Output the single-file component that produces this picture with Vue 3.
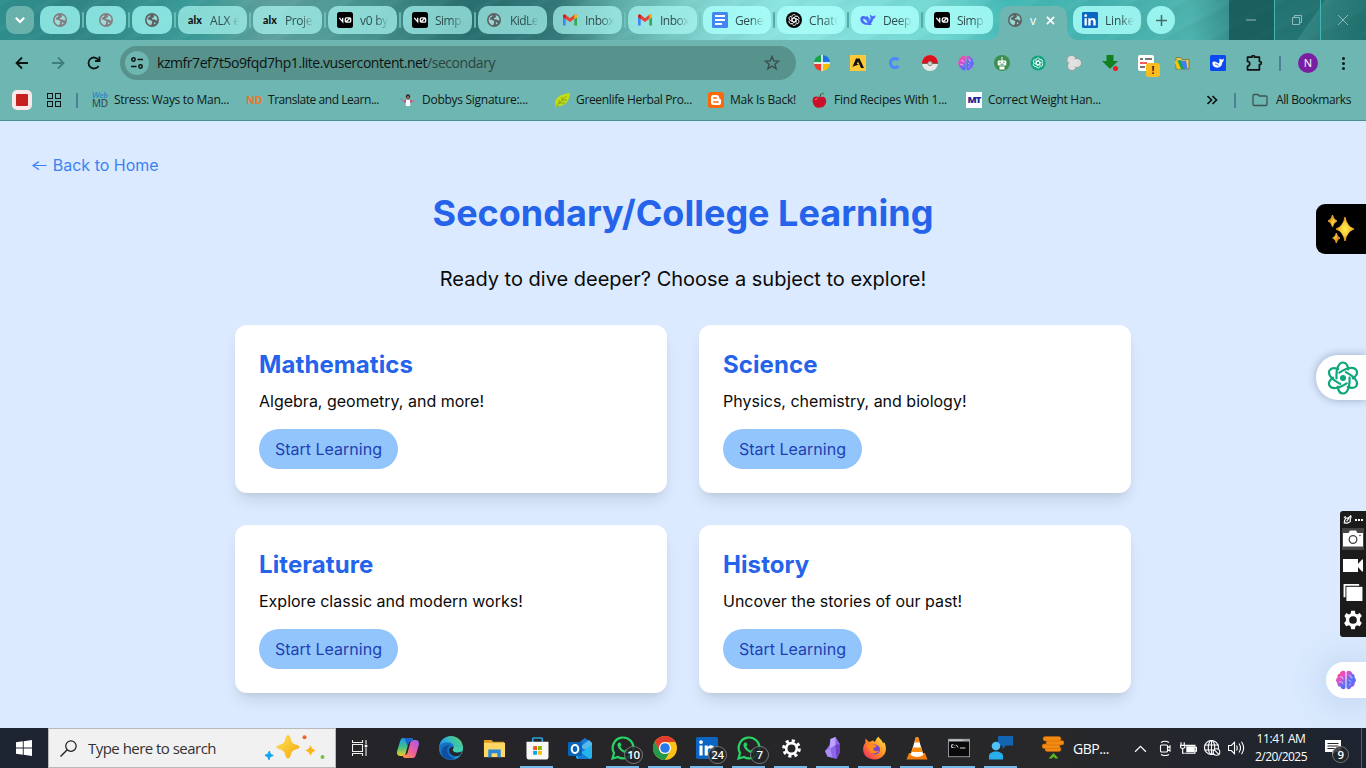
<script setup>
const tabs = [
  { icon: 'globe', small: true },
  { icon: 'globe', small: true },
  { icon: 'globe', small: true, dark: true },
  { mark: 'alx', title: 'ALX e', fit: 30 },
  { mark: 'alx', title: 'Proje', fit: 27 },
  { icon: 'v0', title: 'v0 by', fit: 28 },
  { icon: 'v0', title: 'Simp', fit: 26 },
  { icon: 'globe', title: 'KidLe', fit: 28, dark: true },
  { icon: 'gmail', title: 'Inbox', fit: 29 },
  { icon: 'gmail', title: 'Inbox', fit: 29 },
  { icon: 'docs', title: 'Gene', fit: 28, narrow: true },
  { icon: 'gpt', title: 'ChatG', fit: 34, narrow: true },
  { icon: 'whale', title: 'Deep', fit: 28, narrow: true },
  { icon: 'v0', title: 'Simp', fit: 26, narrow: true },
]

const extensions = [
  'quad', 'amber', 'cee', 'ball', 'brain', 'robot', 'gptgreen',
  'clover', 'down', 'list', 'drive', 'bluewhale', 'puzzle',
]

const bookmarks = [
  { mark: 'webmd', lines: ['Web', 'MD'], title: 'Stress: Ways to Man...', fit: 115 },
  { mark: 'nd', lines: ['ND'], title: 'Translate and Learn...', fit: 111 },
  { icon: 'dobby', title: 'Dobbys Signature:...', fit: 106 },
  { icon: 'leaf', title: 'Greenlife Herbal Pro...', fit: 116 },
  { icon: 'blogger', title: 'Mak Is Back!', fit: 66, short: true },
  { icon: 'apple', title: 'Find Recipes With 1...', fit: 113 },
  { mark: 'mt', lines: ['MT'], title: 'Correct Weight Han...', fit: 113 },
]

const subjects = [
  { title: 'Mathematics', text: 'Algebra, geometry, and more!' },
  { title: 'Science', text: 'Physics, chemistry, and biology!' },
  { title: 'Literature', text: 'Explore classic and modern works!' },
  { title: 'History', text: 'Uncover the stories of our past!' },
]

const apps = [
  { icon: 'copilot', wide: true },
  { icon: 'edge', wide: true },
  { icon: 'explorer', wide: true },
  { icon: 'store', open: true, wide: true },
  { icon: 'outlook', wide: true },
  { icon: 'whatsapp', open: true, badge: '10' },
  { icon: 'chrome', open: true },
  { icon: 'linkedin', open: true, badge: '24' },
  { icon: 'whatsapp', open: true, badge: '7' },
  { icon: 'gear', open: true },
  { icon: 'obsidian', open: true },
  { icon: 'firefox', open: true },
  { icon: 'vlc', open: true },
  { icon: 'cmd', open: true },
  { icon: 'people', open: true },
]

// Adjusts tracking so a label takes exactly the given width.
const vFit = {
  mounted(el, { value }) {
    if (!value) return
    const width = el.getBoundingClientRect().width
    el.style.letterSpacing = (value - width) / el.textContent.length + 'px'
  },
}
</script>

<template>
  <svg class="sprite" aria-hidden="true">
    <defs>
      <linearGradient id="gBrain" x1="0" x2="1" y1="0" y2="1"><stop offset="0" stop-color="#ff4a6a" /><stop offset=".3" stop-color="#e54fc8" /><stop offset=".62" stop-color="#4f6ff8" /><stop offset="1" stop-color="#b453ee" /></linearGradient>
      <linearGradient id="gStar" x1="0" x2="1" y1="0" y2="1"><stop offset="0" stop-color="#ffe25a" /><stop offset="1" stop-color="#f5a70c" /></linearGradient>
      <radialGradient id="gSpark"><stop offset="0" stop-color="#fff04a" /><stop offset=".55" stop-color="#fcc93a" /><stop offset="1" stop-color="#e08a1c" /></radialGradient>
      <linearGradient id="gEdge" x1="0" x2="1" y1="1" y2="0"><stop offset="0" stop-color="#0f5fb8" /><stop offset=".5" stop-color="#2aa9e6" /><stop offset="1" stop-color="#5be35a" /></linearGradient>
      <linearGradient id="gCopA" x1="0" x2="0" y1="0" y2="1"><stop offset="0" stop-color="#1a9bee" /><stop offset=".5" stop-color="#3fbf8a" /><stop offset="1" stop-color="#f2cf1c" /></linearGradient>
      <linearGradient id="gCopB" x1="1" x2="0" y1="0" y2="1"><stop offset="0" stop-color="#9a5cf5" /><stop offset=".5" stop-color="#ee5c9c" /><stop offset="1" stop-color="#ff9e3e" /></linearGradient>
      <linearGradient id="gFox" x1="1" x2="0" y1="0" y2="1"><stop offset="0" stop-color="#fff04d" /><stop offset=".45" stop-color="#ff9320" /><stop offset="1" stop-color="#f2206b" /></linearGradient>
    </defs>

    <symbol id="globe" viewBox="0 0 16 16"><circle cx="8" cy="8" r="8" fill="currentColor" /><path d="M6.200 2.200 5.800 4.200 3.900 5 3 7.400 5 7.800 7 8.600 8.400 9.800 7.800 12.200 6.800 14.100A6.200 6.200 0 0 1 2 6.700 6.200 6.200 0 0 1 6.200 2.200ZM9 2l1.600 1.200-.9 2-2 .7.600 1.600 2.200-.4 1.600 1.300 2 .1A6.200 6.200 0 0 0 9 2Zm1.700 8.200 1.600 1.400-1.400 1.600-.9-1.400Z" fill="#a9f4f0" opacity=".8" /></symbol>
    <symbol id="v0" viewBox="0 0 16 16"><rect width="16" height="16" rx="2.500" fill="#000" /><path d="M2.300 5.800 5.700 9.800V5.800M8.300 9V7q0-1.200 1.200-1.200h3q1.200 0 1.200 1.200v1.900q0 1.200-1.200 1.200h-3Q8.300 10.100 8.300 9M8.700 9.900 13.300 6.100" fill="none" stroke="#fff" stroke-width="1.300" /></symbol>
    <symbol id="gmail" viewBox="0 0 16 16"><path d="M1 13.500h2.700V7.200L1 5.200Z" fill="#4285f4" /><path d="M12.300 13.500H15V5.200l-2.700 2Z" fill="#34a853" /><path d="M1 5.200v-1C1 2.400 2.800 2 4 3l4 3.200V10L3.700 7Z" fill="#ea4335" /><path d="m8 10 4.300-3.200L15 5.200v-1C15 2.400 13.200 2 12 3L8 6.200Z" fill="#ea4335" /><path d="M12.300 3v4.100L15 5.200v-1C15 2.400 13.400 2.100 12.300 3Z" fill="#fbbc04" /><path d="M3.700 3v4.100L1 5.200v-1C1 2.400 2.600 2.100 3.700 3Z" fill="#c5221f" /></symbol>
    <symbol id="docs" viewBox="0 0 16 16"><rect width="16" height="16" rx="1.500" fill="#4285f4" /><path d="M3 4h10M3 8h10M3 12h7" stroke="#fff" stroke-width="1.800" /></symbol>
    <symbol id="knot" viewBox="0 0 16 16"><g fill="none" stroke="currentColor" stroke-width="1"><path id="petal" d="M8 5.500 5.500 7V4.200a2.500 2.500 0 0 1 4.700-1.100" /><use href="#petal" transform="rotate(60 8 8)" /><use href="#petal" transform="rotate(120 8 8)" /><use href="#petal" transform="rotate(180 8 8)" /><use href="#petal" transform="rotate(240 8 8)" /><use href="#petal" transform="rotate(300 8 8)" /><path d="m8 5.400 2.300 1.300v2.600L8 10.600 5.700 9.300V6.700Z" /></g></symbol>
    <symbol id="gpt" viewBox="0 0 16 16"><circle cx="8" cy="8" r="8" fill="#050505" /><use href="#knot" x="1" y="1" width="14" height="14" color="#fff" /></symbol>
    <symbol id="gptgreen" viewBox="0 0 16 16"><circle cx="8" cy="8" r="7.500" fill="#12a37f" /><use href="#knot" x="1.500" y="1.500" width="13" height="13" color="#fff" /></symbol>
    <symbol id="whale" viewBox="0 0 16 16"><path fill-rule="evenodd" d="M.5 6C1.500 3.600 4 3.600 6 4.800L7.200 4l1.600 1.900 1.700 1.600C10.900 6 10 4.800 10 2.800c1 .2 1.600 1 2.200 1.400 1 .3 2-.2 3.300-1.200 0 2.400-.9 3.800-2.500 4.300-.3 2.100-1 3.200-2.200 4.300l1.200 1c-1.700.7-3.600.6-5 .2C3 12.600-.3 9.800.5 6Zm2.400.7c.2 2.600 2.300 4.200 4.800 4.300C7 8.600 5.300 6.700 2.900 6.700Zm5.300.1.900 1.900.8-.6Z" fill="#4d6bfe" /></symbol>
    <symbol id="linkedin" viewBox="0 0 16 16"><rect width="16" height="16" rx="1.300" fill="#0a66c2" /><path d="M2.500 6.200h2.300v7.300H2.500ZM6.300 6.200h2.200v1c1.400-2 5.200-1.500 5.200 2v4.300h-2.400V9.700c0-2.200-2.700-2-2.700 0v3.800H6.300Z" fill="#fff" /><circle cx="3.650" cy="3.700" r="1.400" fill="#fff" /></symbol>

    <symbol id="quad" viewBox="0 0 16 16"><path d="M7.300 7.300H0A8 8 0 0 1 7.300 0Z" fill="#16a34a" /><path d="M8.700 7.300H16A8 8 0 0 0 8.700 0Z" fill="#1a73e8" /><path d="M7.300 8.700H0A8 8 0 0 0 7.300 16Z" fill="#ea3b2d" /><path d="M8.700 8.700H16A8 8 0 0 1 8.700 16Z" fill="#fbbc04" /><path d="M8 0v16M0 8h16" stroke="#fff" stroke-width="1.400" /></symbol>
    <symbol id="amber" viewBox="0 0 16 16"><path fill="#fdc938" d="M0 0h16v16H0z" /><path d="M6 3.500h3.500L14 13h-3L8 6.500 6.800 9 9 9.500 3 11.500 2 13Z" fill="#111" /></symbol>
    <symbol id="cee" viewBox="0 0 16 16"><path d="M12.500 5A4.600 4.600 0 1 0 12.500 11" fill="none" stroke="#4a86ff" stroke-width="3" /></symbol>
    <symbol id="ball" viewBox="0 0 16 16"><circle cx="8" cy="8" r="8" fill="#e8e8e8" /><path d="M0 8a8 8 0 0 1 16 0Z" fill="#d8131b" /><path d="M0 8.500h16" stroke="#84565a" stroke-width="1" /><circle cx="8" cy="8.500" r="2.200" fill="#ccc" stroke="#777" stroke-width=".7" /></symbol>
    <symbol id="brain" viewBox="0 0 16 16"><path d="M7.600 1.800C6.500-.3 3.300.8 3.200 2.700 1.200 3 .8 5 1.300 6-.5 7-.2 9.500 1.100 10.200c-.3 2 1 3.400 2.500 3.200C4.300 15.800 7 16 7.600 14.200ZM8.400 1.800C9.500-.3 12.700.8 12.800 2.700c2 .3 2.400 2.300 1.900 3.300 1.800 1 1.500 3.500.2 4.200.3 2-1 3.400-2.500 3.200-.7 2.400-3.400 2.600-4 .8Z" fill="url(#gBrain)" /><path d="M3 5.500h2l.8 2M2.200 9.500h2.500l1 1.800M10.300 4.200l1.600.5v1.600h1.500M10 8l2.300 1.400M10.300 12l1.500-1" fill="none" stroke="#fff" stroke-opacity=".75" stroke-width=".6" /></symbol>
    <symbol id="robot" viewBox="0 0 16 16"><circle cx="8" cy="8" r="8" fill="#3d8f4e" /><path d="M4.500 5.500h7q.8 0 .8.800v3.400q0 .8-.8.800h-7q-.8 0-.8-.8V6.300q0-.8.800-.8ZM7.500 2h1v4h-1ZM5.500 11.500h5v3h-5Z" fill="#fff" /><path d="M5.500 7.300h1.300M9.200 7.300h1.300M6.500 9.200h3" stroke="#3d8f4e" stroke-width="1" /></symbol>
    <symbol id="clover" viewBox="0 0 16 16"><g fill="#dedede" stroke="#8e8e8e" stroke-width=".7"><circle cx="5.500" cy="5" r="4.600" /><circle cx="6" cy="11" r="4.500" /><circle cx="11" cy="8" r="4.500" /></g><circle cx="7.300" cy="8" r="3.800" fill="#e2e2e2" /></symbol>
    <symbol id="down" viewBox="0 0 16 16"><path d="M4.500 0h7v6H16l-8 8-8-8h4.500Z" fill="#128020" /><circle cx="13.500" cy="13.500" r="2.500" fill="#f3191c" /></symbol>
    <symbol id="list" viewBox="0 0 16 16"><rect width="16" height="16" rx="2" fill="#fff" /><path d="M2 4h3M7 4h7M2 12h5" stroke="#494949" stroke-width="1.600" /><path d="M2 8h7" stroke="#ee4c4c" stroke-width="1.800" /></symbol>
    <symbol id="drive" viewBox="0 0 16 16"><path d="M2 14V2.500h4.500L8 4.500h7V14Z" fill="#efc954" stroke="#6b6a33" stroke-width=".7" /><path d="m.3 6.500 3-1 4 8.500H4Z" fill="#ffc400" /><path d="m3.300 5.500 3.700-.5 4 9H7Z" fill="#18a35b" /><path d="m6.500 6 5.500-.5 1.500 8.500H10Z" fill="#3f7fef" /></symbol>
    <symbol id="bluewhale" viewBox="0 0 16 16"><rect width="16" height="16" rx="1.500" fill="#0a49f0" /><path d="M2.500 7C4 6 5.500 6.500 7 7.500l2 1c.9-1.500.2-3.200.5-5l2.300 1.200 2-1.200c0 2.200-.5 3.200-1.500 3.800-.2 4.200-3.500 6.400-7.100 5C3.200 11.500 2 9.500 2.500 7Z" fill="#fff" /><path d="M5 9c1.600 0 3 .9 3.800 2.300" fill="none" stroke="#0a49f0" stroke-width=".8" /></symbol>
    <symbol id="puzzle" viewBox="0 0 16 16"><path d="M1.500 2.200H6V1.500a1.200 1.200 0 0 1 2.400 0v.7h5v4.300h.4a1.500 1.500 0 0 1 0 3h-.4v5.300H1.500V11a2 2 0 0 0 0-4.500Z" fill="none" stroke="#111" stroke-width="1.700" stroke-linejoin="round" /></symbol>

    <symbol id="dobby" viewBox="0 0 16 16"><circle cx="8" cy="4.500" r="2.200" fill="#382b2b" /><path d="M1.500 7 4 9.500l2.500-1.500h3L12 9.500l3-1" fill="none" stroke="#b98084" stroke-width="1.200" /><path d="M5.800 8h4.400v6H5.800Z" fill="#fff" /><path d="M4.400 8h1.500v2.500H4.400ZM10.200 8h1.500v2.500h-1.500Z" fill="#d92e9e" /><circle cx="8" cy="5.200" r="1.100" fill="#a46b51" /><circle cx="1.500" cy="7" r="1" fill="#5d9dc8" /></symbol>
    <symbol id="leaf" viewBox="0 0 16 16"><path d="M1.500 13.500C-.5 6 6.500 2.500 15.700.8 16 9 11 14.500 3.500 14L1.600 16H.8Z" fill="#c4dd16" /><path d="M1 15.500 12.500 4M5 12V8M8 9V5M6 11h5M9 8h4" stroke="#6b9414" stroke-width=".7" fill="none" /></symbol>
    <symbol id="blogger" viewBox="0 0 16 16"><rect width="16" height="16" rx="2.500" fill="#f96a0b" /><path d="M5.500 3h3q2.700 0 2.700 2.800 0 1 .8 1.100 1 .1 1 1v2.500Q13 13 10.500 13h-5Q3 13 3 10.500v-5Q3 3 5.500 3Z" fill="#fff" /><path d="M5.800 6h2.500M5.800 10h4.300" stroke="#f96a0b" stroke-width="1.500" stroke-linecap="round" /></symbol>
    <symbol id="apple" viewBox="0 0 16 16"><path d="M7.500 5.500C3.500 3-.5 5 .8 10.500 2 15 5 16.300 7.500 15.500c2.500.3 5.500-1 6.500-5C14.800 5 11 3.700 7.500 5.500Z" fill="#ca1026" /><path d="M3 8q1-2 2.600-1" stroke="#f38183" fill="none" /><path d="M7.400 5.500 9 2" stroke="#593520" stroke-width="1" /><path d="M8.800 2q2.500-2.600 3.700-1-1.700 2.500-3.700 1Z" fill="#48923d" /></symbol>

    <symbol id="gear" viewBox="0 0 24 24"><path fill-rule="evenodd" d="m10 2-.5 3-2 1-2.700-1.600L2.600 7.600 4.300 10v3.200l-2 2 2.200 3.500 2.900-1L9.500 19l.5 3h4l.5-3 2-1.200 2.900 1 2.200-3.600-2-2V10l2-2.400-2.200-3.300L16.500 6l-2-1L14 2Zm2 5.800a4.200 4.200 0 1 1 0 8.400 4.200 4.200 0 0 1 0-8.400Z" fill="#fff" /></symbol>
    <symbol id="cogwheel" viewBox="0 0 24 24"><g fill="none" stroke="#fff"><circle cx="12" cy="12" r="6.700" stroke-width="3.400" /><circle cx="12" cy="12" r="9.800" stroke-width="4" stroke-dasharray="3.900 3.797" /></g></symbol>
    <symbol id="copilot" viewBox="0 0 24 24"><path d="M7 2h7.500c2 0 2.700 1.500 3.300 3.300h-3.300q-1.500 0-2 1.700L9.500 18q-.7 2-2.500 2H4.500C1 20 .6 17 1.300 14.500L4 5.500Q5 2 7 2Z" fill="url(#gCopA)" /><path d="M17 22H9.500c-2 0-2.800-1.500-3.300-3.300h3.300q1.500 0 2-1.700l3-11Q15 4 17 4h2.500c3.500 0 3.900 3 3.200 5.500l-2.700 9Q19 22 17 22Z" fill="url(#gCopB)" /><path d="M13.500 2q2.700 0 3.700 3.300h-3Q13 5.300 12.500 7l-1 3L9.500 5Q9 2.500 7 2Z" fill="#1b61d1" /></symbol>
    <symbol id="edge" viewBox="0 0 24 24"><circle cx="12" cy="12" r="12" fill="url(#gEdge)" /><path d="M0 12C1 5.500 12 4 14.500 9.500c1 2-.5 3.500-.5 4.500 0 2 5 3.500 9 .5C20 22 10 26 4 21 .5 18 0 14 0 12Z" fill="#1671c3" /><path d="M8.500 12C7 17 11 21.500 16 22.800c-8 3.200-15-3-13-9.300C4.500 10 8 8.500 12 9q-2.800.5-3.500 3Z" fill="#0d4f9e" /><path d="M14.500 9.500c1.500 2.500-1 3.500-.5 5 1 2.500 6 2.500 9.300.3.500-2 .8-3.500.4-5L20 12Z" fill="#43cfad" /><path d="M14.300 10.500c.5 2-1.200 3-.5 4.300 1.200 2.200 5.700 2.700 9.200.7q-.7 2-2.300 4C15 21.500 8 18 10.800 12Z" fill="#25242a" /></symbol>
    <symbol id="explorer" viewBox="0 0 24 24"><path d="M1 3h8l1.500 2H22v5H1Z" fill="#dd9b20" /><path d="M1 6h22v15H1Z" fill="#ffd767" /><path d="M5.500 13h13v8H15v-4H9v4H5.500Z" fill="#2789d8" /></symbol>
    <symbol id="store" viewBox="0 0 24 24"><path d="M7 6V2.200Q7 1 8.200 1h7.600Q17 1 17 2.200V6" fill="none" stroke="#2aa5e0" stroke-width="1.700" /><path d="M.5 5h23v15.500q0 3-3 3h-17q-3 0-3-3Z" fill="#f7f7f7" /><path d="M7.500 9.500h4v4h-4Z" fill="#f25022" /><path d="M12.500 9.500h4v4h-4Z" fill="#7fba00" /><path d="M7.500 14.500h4v4h-4Z" fill="#00a4ef" /><path d="M12.500 14.500h4v4h-4Z" fill="#ffb900" /></symbol>
    <symbol id="outlook" viewBox="0 0 24 24"><path d="m9 8 8-6 7 5v14q0 2-2 2H10q-2 0-2-2Z" fill="#1b78d4" /><path d="m12 11 9-7 3 3v10Z" fill="#52b9ef" /><path d="m8 20 16-11v11q0 3-3 3H11q-3 0-3-3Z" fill="#25b5ec" /><path d="m9 14 13 9H10Z" fill="#127fd5" /><rect y="6" width="14" height="14" rx="1.300" fill="#0764b8" /><ellipse cx="7" cy="13" rx="3.300" ry="3.900" fill="none" stroke="#fff" stroke-width="2" /></symbol>
    <symbol id="whatsapp" viewBox="0 0 24 24"><path d="M1.500 22.500 3 17A10.400 10.400 0 1 1 7 21Z" fill="none" stroke="#28d366" stroke-width="2.200" /><path d="M8 6.500q-1 0-1.500 2c-.5 4 6 9.500 10 8.700 2-.6 1.800-2.200 1.500-2.600l-3-1.400-1.500 1.600q-3-1.300-4.200-4.200l1.200-1.500L9.300 6.500Z" fill="#28d366" /></symbol>
    <symbol id="chrome" viewBox="0 0 24 24"><circle cx="12" cy="12" r="12" fill="#fbc116" /><path d="M1.600 6A12 12 0 0 1 22.400 6H12a6 6 0 0 0-5.200 9Z" fill="#e33b2e" /><path d="M1.600 6A12 12 0 0 0 12 24l5.200-9a6 6 0 0 1-10.400 0Z" fill="#279847" /><circle cx="12" cy="12" r="6" fill="#fff" /><circle cx="12" cy="12" r="4.800" fill="#2979e8" /></symbol>
    <symbol id="obsidian" viewBox="0 0 24 24"><path d="m9.500 3 5-2 4.500 7v8l-3.500 7-9-2.500L4 15l4.500-6Z" fill="#8b66e8" /><path d="m9.500 3 5-2v8l-6 4Z" fill="#bba3ff" /><path d="m4 15 5-3.500 2.500 10-5-1Z" fill="#aa8df7" /><path d="m14.500 9 4.500-1v8l-3.500 7Z" fill="#6e43c6" /></symbol>
    <symbol id="firefox" viewBox="0 0 24 24"><path d="M15.500.5c1 2.500 3.500 3.500 4.500 6.500l1.500-.5C26 17 19 23.500 12 23.500-.5 23.500-2 12 2.300 7L2.500 2.500 6 6l4-1.500 2 1.500Q12.500 3 15.500.5Z" fill="url(#gFox)" /><circle cx="12" cy="13.500" r="5" fill="#7847cf" /><path d="M4 10q3-3.500 7-1l3 .5q-1 2-3.500 2.500c-1 3 2.500 4 5.500 2.500-2 4-8.500 4-10 0Z" fill="#ff8a20" /></symbol>
    <symbol id="vlc" viewBox="0 0 24 24"><path d="M4 17h16l2.500 6.500h-21Z" fill="#f57c08" /><path d="M11 1h2l5.500 18q-6.500 4-13 0Z" fill="#fff" /><path d="M11 1h2l1.800 5.500H9.200ZM7.700 11.500h8.600l1.300 4.500H6.400Z" fill="#ff8b0c" /></symbol>
    <symbol id="cmd" viewBox="0 0 24 24"><path fill="#9ba1a5" d="M0 2h24v20H0z" /><path fill="#090909" d="M1 5h22v16H1z" /><path d="M6 8.500H4v3h2M7.500 9v.7M7.500 11v.7M9 8.500l2 3M13 12h6" fill="none" stroke="#eee" stroke-width="1" /><path d="M1.500 3.500h15" stroke="#dce2e6" /></symbol>
    <symbol id="people" viewBox="0 0 24 24"><path d="M9 0h15v9.500h-7L13.500 13V9.500H9Z" fill="#1265b2" /><circle cx="7" cy="10" r="4.300" fill="#4fc3f7" /><path d="M0 23.500V20c0-6 14-6 14 0v3.500Z" fill="#28aeea" /></symbol>
  </svg>

  <div class="screen">
    <header class="browser">
      <div class="strip">
        <button class="tab-search"><svg viewBox="0 0 10 10"><path d="m1.500 3.200 3.500 3.500 3.500-3.500" fill="none" stroke="#fff" stroke-width="1.800" /></svg></button>
        <div v-for="(tab, i) in tabs" :key="i" class="tab" :class="{ small: tab.small, narrow: tab.narrow, dark: tab.dark, bare: i === 7 || i === 13 }">
          <span v-if="tab.mark" class="mark" :class="tab.mark"><span v-fit="14">{{ tab.mark }}</span></span>
          <svg v-else class="favicon" :class="tab.icon"><use :href="'#' + tab.icon" /></svg>
          <span v-if="tab.title" class="clip"><span v-fit="tab.fit" class="title">{{ tab.title }}</span></span>
        </div>
        <div class="tab active">
          <svg class="favicon globe"><use href="#globe" /></svg>
          <span class="clip">v</span>
          <svg class="close" viewBox="0 0 10 10"><path d="m1 1 8 8M9 1 1 9" stroke="#fff" stroke-width="1.800" /></svg>
        </div>
        <div class="tab narrow">
          <svg class="favicon linkedin"><use href="#linkedin" /></svg>
          <span class="clip"><span v-fit="29" class="title">Linke</span></span>
        </div>
        <button class="new-tab"><svg viewBox="0 0 10 10"><path d="M5 0v10M0 5h10" stroke="#456b6b" stroke-width="1.400" /></svg></button>
        <div class="window-controls">
          <span><svg viewBox="0 0 12 12"><path d="M1 6h10" /></svg></span>
          <span><svg viewBox="0 0 12 12"><path d="M1.500 3.500h7v7h-7ZM3.500 3.500v-2h7v7h-2" /></svg></span>
          <span><svg viewBox="0 0 12 12"><path d="m1 1 10 10M11 1 1 11" /></svg></span>
        </div>
      </div>

      <div class="toolbar">
        <div class="nav">
          <svg viewBox="0 0 16 16"><path d="M14 8H3M8 2.500 2.500 8 8 13.500" /></svg>
          <svg class="dim" viewBox="0 0 16 16"><path d="M2 8h11M8 2.500 13.500 8 8 13.500" /></svg>
          <svg viewBox="0 0 16 16"><path d="M12.600 11A5.500 5.500 0 1 1 12.600 5M13.500 1.500V6H9" /></svg>
        </div>
        <div class="omnibox">
          <span class="site"><svg viewBox="0 0 14 14"><g fill="none" stroke="#111" stroke-width="1.500"><circle cx="3.500" cy="3.500" r="1.700" /><circle cx="10.500" cy="10.500" r="1.700" /><path d="M7.500 3.500H13M1 10.500h5.500" /></g></svg></span>
          <span v-fit="338" class="url">kzmfr7ef7t5o9fqd7hp1.lite.vusercontent.net<i>/secondary</i></span>
          <svg class="star" viewBox="0 0 16 16"><path d="m8 1.500 1.800 4.400 4.700.3-3.600 3 1.200 4.600L8 11.200l-4.100 2.600 1.200-4.600-3.600-3 4.700-.3Z" /></svg>
        </div>
        <div class="extensions">
          <span v-for="ext in extensions" :key="ext" class="ext">
            <svg><use :href="'#' + ext" /></svg>
            <b v-if="ext === 'list'" class="alert">!</b>
          </span>
        </div>
        <i class="divider"></i>
        <span class="avatar">N</span>
        <span class="kebab"><i></i><i></i><i></i></span>
      </div>

      <div class="bookmarks">
        <span class="record"></span>
        <span class="grid-icon"><i></i><i></i><i></i><i></i></span>
        <i class="divider"></i>
        <div class="links">
          <a v-for="item in bookmarks" :key="item.title" :class="{ short: item.short }">
            <span v-if="item.mark" class="mark" :class="item.mark"><span v-for="line in item.lines" :key="line" v-fit="item.mark === 'mt' ? 13 : 16">{{ line }}</span></span>
            <svg v-else><use :href="'#' + item.icon" /></svg>
            <span v-fit="item.fit">{{ item.title }}</span>
          </a>
        </div>
        <svg class="more" viewBox="0 0 12 12"><path d="m1.500 2 4 4-4 4M6.500 2l4 4-4 4" fill="none" stroke="#111" stroke-width="1.700" /></svg>
        <i class="divider"></i>
        <svg class="folder" viewBox="0 0 16 14"><path d="M1 2.500Q1 1.500 2 1.500h4L7.500 3H14q1 0 1 1v7.500q0 1-1 1H2q-1 0-1-1Z" fill="none" stroke="#3e5552" stroke-width="1.300" /></svg>
        <span v-fit="75">All Bookmarks</span>
      </div>
    </header>

    <main class="page">
      <a class="back"><span class="arrow">←</span> Back to Home</a>
      <h1>Secondary/College Learning</h1>
      <p class="lead">Ready to dive deeper? Choose a subject to explore!</p>
      <div class="cards">
        <section v-for="subject in subjects" :key="subject.title" class="card">
          <h2>{{ subject.title }}</h2>
          <p>{{ subject.text }}</p>
          <button>Start Learning</button>
        </section>
      </div>

      <div class="float sparkle">
        <svg viewBox="0 0 28 28"><g fill="url(#gSpark)"><path d="M18 2q1.500 9.500 9 12-7.500 2.500-9 12-1.500-9.500-9-12 7.500-2.500 9-12Z" stroke="url(#gSpark)" stroke-width="1" /><path d="M5.500 0q.8 4.500 4.500 6-3.700 1.500-4.500 6Q4.700 7.500 1 6 4.700 4.500 5.500 0ZM9.300 18q.6 3.800 3.700 5-3.100 1.200-3.700 5-.6-3.800-3.700-5 3.100-1.200 3.700-5Z" stroke="#f2b23a" stroke-width=".8" /></g></svg>
      </div>
      <div class="float atom">
        <svg viewBox="0 0 34 34"><g fill="none" stroke="#0ea67b" stroke-width="2.200" stroke-linecap="round"><path id="orbit" d="M10.500 17.500C10 8 12.500 1.500 17 1.500c3 0 4.800 3 5.300 7" /><use href="#orbit" transform="rotate(60 17 17)" /><use href="#orbit" transform="rotate(120 17 17)" /><use href="#orbit" transform="rotate(180 17 17)" /><use href="#orbit" transform="rotate(240 17 17)" /><use href="#orbit" transform="rotate(300 17 17)" /></g><circle cx="17" cy="17" r="3" fill="#0ea67b" /></svg>
      </div>
      <div class="float capture">
        <div class="handle"><svg viewBox="0 0 10 10"><path d="M2 8 .8 9.200M3 3.500h2.500L8.500 1 9 1.500 8 5v2.500L5 9H2.500L1.500 7ZM4 7l3-4M1 3l2-1.500" fill="none" stroke="#fff" stroke-width="1.300" /></svg><i></i><i></i><i></i></div>
        <span class="on"><svg viewBox="0 0 20 16"><path d="M0 2.500h5.500L7 0h6l1.500 2.500H20V16H0Z" fill="#fff" /><circle cx="10" cy="9" r="3.800" fill="none" stroke="#444" stroke-width="1.300" /><circle cx="17" cy="5" r=".8" fill="#444" /></svg></span>
        <span><svg viewBox="0 0 20 16"><path d="M0 1.500h15v5l4-4.500h1v12h-1l-4-4.500v5H0Z" fill="#fff" /></svg></span>
        <span><svg viewBox="0 0 20 18"><path d="M0 0h16.500v1.800H2V14H0Z" fill="#fff" /><path d="M3 3h17v15H3Z" fill="#fff" /></svg></span>
        <span><svg class="cog"><use href="#gear" /></svg></span>
      </div>
      <div class="float mind"><svg><use href="#brain" /></svg></div>
    </main>

    <footer class="taskbar">
      <div class="start"><svg viewBox="0 0 16 16"><path d="M0 2.200 6.800 1.300v6.200H0ZM7.700 1.200 16 0v7.500H7.700ZM0 8.400h6.800v6.300L0 13.800ZM7.700 8.400H16V16l-8.300-1.200Z" fill="#fff" /></svg></div>
      <div class="search">
        <svg class="lens" viewBox="0 0 16 16"><circle cx="10.300" cy="5.700" r="4.900" fill="none" stroke="#222" stroke-width="1.200" /><path d="M6.800 9.200.5 15.500" stroke="#222" stroke-width="1.300" /></svg>
        <span v-fit="128">Type here to search</span>
        <svg class="stars" viewBox="0 0 60 26"><path d="M23 0q2 0 3 5 1 3.500 4.500 4.500Q34.500 10.500 34.500 12t-4 2.500Q27 15.500 26 19q-1 4.500-3 4.500T20 19q-1-3.500-4.500-4.500-4-1-4-2.500t4-2.500Q19 8.500 20 5q1-5 3-5Z" fill="url(#gStar)" /><path d="M45.500 10q1 4.300 5.500 5.500-4.500 1.200-5.500 5.500-1-4.300-5.500-5.500 4.500-1.200 5.500-5.500Z" fill="#f8b51e" /><path d="M4.500 16 5.300 19.200 8.300 20.500 5.200 21.600 4 24.800 2.700 21.700-.3 20.300 2.800 19.200Z" fill="#12a5ef" stroke="#12a5ef" stroke-width="1" stroke-linejoin="round" /><circle cx="39.500" cy="2.300" r="2" fill="#ee6527" /><circle cx="57.500" cy="22" r="2" fill="#72c344" /></svg>
      </div>
      <div class="task-view"><svg viewBox="0 0 16 16"><path d="M.5 0v2.500h10V0M.5 16v-2.500h10V16M.5 4.500h10v7H.5ZM14 0v4M14 8v8" fill="none" stroke="#eee" stroke-width="1.100" /><path d="M12.700 4.700h2.600v2.600h-2.600Z" fill="#fff" /></svg></div>
      <div class="apps">
        <div v-for="(app, i) in apps" :key="i" class="app" :class="{ open: app.open, wide: app.wide }">
          <svg v-if="app.icon === 'gear'" class="cogwheel"><use href="#cogwheel" /></svg>
          <svg v-else :class="app.icon"><use :href="'#' + app.icon" /></svg>
          <span v-if="app.badge" class="badge">{{ app.badge }}</span>
        </div>
      </div>
      <div class="tray">
        <svg class="coins" viewBox="0 0 22 24"><g fill="#f38b13" stroke="#c56106" stroke-width=".5"><rect x="3" y="11" width="16" height="4.500" rx="2.200" /><rect y="8" width="18" height="4.500" rx="2.200" /><rect x="4" y="4.500" width="18" height="4.500" rx="2.200" /><rect x="1" y=".5" width="18" height="4.500" rx="2.200" /></g><path d="m6.500 22.500 5-5.500 5 5.500h-3.300l-1.700-1.800-1.700 1.800Z" fill="#5cb51e" /></svg>
        <span v-fit="36" class="currency">GBP...</span>
        <svg class="chevron" viewBox="0 0 12 8"><path d="m1 7 5-5 5 5" /></svg>
        <svg class="meet" viewBox="0 0 12 16"><path d="M2.500 5h5q1 0 1 1v5q0 1-1 1h-5q-1 0-1-1V6q0-1 1-1ZM8.500 8 11 6v5L8.500 9.500M2 2.500q4-2.500 8 0M2 14.500q4 2 8 0" /></svg>
        <svg class="battery" viewBox="0 0 16 12"><path d="M5 3h9v7.500H5M14.500 5H15.500v3.500h-1M1 0v3M4 0v3M.5 3h4v2q-2 2-4 0ZM2.500 6v4.500h2" /><path d="M6.500 4.500H13V9H6.500Z" fill="#fff" /></svg>
        <svg class="network" viewBox="0 0 17 16"><circle cx="7.500" cy="7.500" r="7" /><ellipse cx="7.500" cy="7.500" rx="3.200" ry="7" /><path d="M.5 5h14M.5 10h9M7.500.5v14" /><circle cx="12.500" cy="12" r="3.300" fill="#22252b" /><path d="m10.200 9.700 4.600 4.600" /></svg>
        <svg class="volume" viewBox="0 0 17 14"><path d="M.5 4.500h2.800L6.500 1.300v11.400L3.300 9.500H.5ZM8.500 4.500q1.500 2.500 0 5M11 2.500q3 4.500 0 9M13.500.7q4.300 6.300 0 12.600" /></svg>
        <div class="clock"><span v-fit="49">11:41 AM</span><span v-fit="52">2/20/2025</span></div>
        <div class="action"><svg viewBox="0 0 16 16"><path d="M0 0h16v12H10.500L7 15.500V12H0Z" fill="#fff" /><path d="M2.500 3.500h11M2.500 6h11M2.500 8.500h7" stroke="#22252b" /></svg><span class="badge">9</span></div>
        <i class="peek"></i>
      </div>
    </footer>
  </div>
</template>

<style>
html, body { margin: 0; overflow: hidden; }
</style>

<style scoped>
* { box-sizing: border-box; }
button { border: 0; padding: 0; font: inherit; }
.sprite { position: absolute; width: 0; height: 0; }
.screen { width: 1366px; height: 768px; display: flex; flex-direction: column; overflow: hidden; font: 12px "Open Sans", "Noto Sans", sans-serif; color: #101918; }
svg { display: block; flex: none; }

.browser { height: 121px; background: #6db6b1; border-bottom: 1px solid #488f8b; flex: none; }
.strip {
  height: 40px; display: flex; align-items: flex-start; gap: 6px; padding: 6px 0 0 6px;
  background:
    linear-gradient(125deg, transparent 1085px, rgba(160, 255, 250, .2) 1086px, transparent 1130px),
    repeating-linear-gradient(152deg, rgba(255, 255, 255, .025) 0 4px, rgba(0, 30, 30, .025) 7px 12px, transparent 15px 23px),
    linear-gradient(90deg, #2f8f8f 0, #318685 80px, #3a9b98 190px, #5fa09d 270px, #4b9895 350px, #296f70 470px, #35797b 560px, #5ba8a5 610px, #80d3cf 700px, #8ce5e1 790px, #72d7d2 940px, #43b9b5 1010px, #46b3b0 1100px, #4eb3ae 1190px, #37918f 1230px, #2d8885 1366px);
}
.tab-search, .new-tab { width: 28px; height: 28px; display: grid; place-items: center; background: #69b1ab; border-radius: 9px; }
.tab-search svg { width: 12px; height: 12px; }
.new-tab { background: #98f3ef; border-radius: 50%; }
.new-tab svg { width: 11px; height: 11px; }
.tab { position: relative; width: 69px; height: 28px; border-radius: 10px; display: flex; align-items: center; padding-left: 9px; background: rgba(173, 249, 244, .68); color: #2f4f4e; }
.tab.small { width: 40px; padding-left: 13px; background: rgba(158, 247, 242, .78); }
.tab.narrow { width: 68px; background: rgba(171, 255, 250, .82); }
.tab::after { content: ''; position: absolute; right: -4px; top: 6px; width: 2px; height: 16px; border-radius: 1px; background: rgba(115, 197, 193, .8); }
.tab.bare::after, .tab.active::after { display: none; }
.tab.narrow::after { background: #55aaa5; }
.favicon { width: 16px; height: 16px; }
.favicon.globe { width: 14px; height: 14px; margin-right: 2px; color: #837f80; }
.dark .favicon.globe, .active .favicon.globe { color: #5c6263; }
.clip { width: 29px; margin-left: 7px; overflow: hidden; white-space: nowrap; font-size: 12px; -webkit-mask-image: linear-gradient(90deg, #000 55%, transparent 100%); mask-image: linear-gradient(90deg, #000 55%, transparent 100%); }
.title { display: inline-block; }
.tab.active { width: 68px; height: 34px; padding: 0 0 6px; padding-left: 9px; border-radius: 10px 10px 0 0; background: #6db6b1; color: #fff; }
.tab.active::before, .tab.active::after { display: block; content: ''; position: absolute; top: auto; bottom: 0; left: -10px; width: 10px; height: 10px; border-radius: 0; background: radial-gradient(circle at 0 0, transparent 9.500px, #6db6b1 10px); }
.tab.active::after { left: auto; right: -10px; background: radial-gradient(circle at 100% 0, transparent 9.500px, #6db6b1 10px); }
.active .clip { width: 7px; margin-left: 6px; -webkit-mask-image: none; mask-image: none; }
.close { width: 9px; height: 9px; margin-left: 9px; }
.window-controls { width: 137px; height: 40px; margin: -6px 0 0 auto; display: flex; background: rgba(4, 60, 61, .3); }
.window-controls span { flex: 1; display: grid; place-items: center; border-right: 1px solid #43b5b3; }
.window-controls span:first-child { background: rgba(4, 45, 46, .3); }
.window-controls span:last-child { border: 0; }
.window-controls svg { width: 12px; height: 12px; margin-right: 2px; fill: none; stroke: #8fb9b9; stroke-width: 1; }

.mark { width: 16px; height: 16px; flex: none; display: flex; flex-direction: column; align-items: center; justify-content: center; white-space: nowrap; }
.alx { font: 900 10.500px/16px Lato, sans-serif; color: #111; }
.webmd { font: italic 8px/7px Lato, sans-serif; color: #187cc1; }
.webmd span:last-child { font: 10px/9px "Open Sans", sans-serif; color: #303939; }
.nd { font: 700 11px/16px "Open Sans", sans-serif; color: #e5792e; }
.mt { font: 800 9.500px/16px "Open Sans", sans-serif; color: #1b2795; background: #fff; }

.toolbar { height: 46px; display: flex; align-items: center; }
.nav { width: 120px; padding-left: 14px; display: flex; gap: 20px; }
.nav svg { width: 16px; height: 16px; fill: none; stroke: #0d1514; stroke-width: 1.800; }
.nav .dim { stroke: #3f7e7b; }
.omnibox { width: 676px; height: 34px; border-radius: 17px; background: #57928d; display: flex; align-items: center; padding: 0 16px 0 5px; }
.site { width: 24px; height: 24px; border-radius: 50%; background: #6db6b1; display: grid; place-items: center; }
.site svg { width: 14px; height: 14px; }
.url { margin-left: 8px; font-size: 14px; line-height: 18px; color: #0c1211; white-space: nowrap; }
.url i { font-style: normal; color: #2b4441; }
.star { width: 16px; height: 16px; margin-left: auto; fill: none; stroke: #394e4c; stroke-width: 1.400; }
.extensions { display: flex; gap: 20px; margin-left: 18px; }
.ext { position: relative; width: 16px; height: 16px; }
.ext svg { width: 16px; height: 16px; }
.alert { position: absolute; left: 8px; top: 8px; width: 14px; height: 14px; border-radius: 3px; background: #fbbd1e; font-size: 10px; line-height: 14px; text-align: center; color: #222; }
.divider { width: 2px; height: 15px; background: #507f99; flex: none; }
.toolbar .divider { margin-left: 17px; }
.avatar { width: 20px; height: 20px; margin-left: 17px; border-radius: 50%; background: #7b1fa2; color: #fff; text-align: center; line-height: 20px; font-size: 11px; }
.kebab { margin-left: 24px; display: grid; gap: 2px; }
.kebab i { width: 3px; height: 3px; border-radius: 50%; background: #101918; }

.bookmarks { height: 28px; display: flex; align-items: center; padding-left: 12px; white-space: nowrap; line-height: 16px; }
.record { width: 20px; height: 20px; border-radius: 5px; background: #c5221f; border: 4px solid #fce8e8; }
.grid-icon { display: grid; grid-template-columns: 6px 6px; gap: 2px; margin: 0 15px; }
.grid-icon i { width: 6px; height: 6px; border: 1.500px solid #111; }
.links { display: flex; gap: 16px; margin-left: 14px; }
.links a { width: 138px; display: flex; gap: 6px; align-items: center; }
.links a.short { width: 88px; }
.links a > span:last-child { margin-top: -1px; }
.links svg { width: 16px; height: 16px; }
.more { width: 12px; height: 12px; margin: 0 16px 0 auto; }
.folder { width: 16px; height: 14px; margin: 0 8px 0 16px; }
.bookmarks > span:last-child { margin: -1px 15px 0 0; }

.page { position: relative; height: 607px; flex: none; padding: 32px; background: #dbeafe; font: 16px/24px Inter, sans-serif; color: #0a0a0a; overflow: hidden; }
.back { display: block; height: 24px; color: #3b82f6; }
.arrow { display: inline-block; margin-right: 1px; transform: scale(1.25, .82); }
h1 { margin: 16px 0 32px; font-size: 36px; line-height: 40px; font-weight: 700; text-align: center; color: #2563eb; }
.lead { margin: 0 0 32px; font-size: 20px; line-height: 28px; text-align: center; }
.cards { width: 896px; margin: 0 auto; display: grid; grid-template-columns: 1fr 1fr; gap: 32px; }
.card { height: 168px; padding: 24px; border-radius: 12px; background: #fff; box-shadow: 0 10px 15px -3px rgba(0, 0, 0, .1), 0 4px 6px -4px rgba(0, 0, 0, .1); }
h2 { margin: 0 0 8px; font-size: 24px; line-height: 32px; font-weight: 700; letter-spacing: .09px; color: #2563eb; }
.card p { margin: 0 0 16px; }
.card button { height: 40px; padding: 8px 16px; border-radius: 20px; background: #93c5fd; color: #1e40af; display: block; }
.float { position: absolute; right: 0; display: flex; align-items: center; }
.sparkle { top: 83px; width: 50px; height: 50px; padding-left: 11px; background: #000; border-radius: 9px 0 0 9px; }
.sparkle svg { width: 28px; height: 28px; }
.atom { top: 234px; width: 50px; height: 45px; padding-left: 10px; border-radius: 22px 0 0 22px; background: #fff; box-shadow: 0 0 8px rgba(30, 50, 80, .35); }
.atom svg { width: 34px; height: 34px; }
.capture { top: 390px; width: 26px; height: 126px; padding-top: 3px; flex-direction: column; border-radius: 3px 0 0 3px; background: #1b1b1b; }
.handle { height: 11px; display: flex; align-items: center; gap: 1px; margin-bottom: 3px; }
.handle i { width: 2px; height: 2px; background: #fff; }
.capture span { width: 22px; height: 22px; margin-bottom: 5px; display: grid; place-items: center; }
.capture span.on { background: #444; }
.capture svg { width: 20px; height: 17px; margin-top: -2px; }
.capture .handle svg { width: 9px; height: 9px; margin: 0 2px 0 0; }
.capture svg.cog { width: 22px; height: 22px; margin-top: 0; }
.mind { top: 541px; width: 40px; height: 36px; padding-left: 10px; border-radius: 18px 0 0 18px; background: #fff; box-shadow: 0 2px 36px rgba(80, 130, 180, .3); }
.mind svg { width: 20px; height: 20px; }

.taskbar { height: 40px; flex: none; display: flex; background: linear-gradient(90deg, #1d2531 0, #242429 330px, #262528 700px, #28282a 1050px, #1d2430 1366px); color: #fff; }
.start { width: 48px; display: grid; place-items: center; }
.start svg { width: 16px; height: 16px; }
.search { width: 288px; display: flex; align-items: center; padding-left: 11px; background: #f1f1f1; border: 1px solid #b9b9b9; color: #333; font-size: 15px; white-space: nowrap; }
.lens { width: 17px; height: 17px; margin-right: 11px; }
.stars { width: 60px; height: 26px; margin-left: auto; margin-right: 10px; }
.task-view { width: 48px; margin-right: 3px; display: grid; place-items: center; }
.task-view svg { width: 16px; height: 16px; }
.apps { display: flex; }
.app { position: relative; width: 42px; height: 40px; display: grid; place-items: center; }
.app.wide { width: 43px; }
.app svg { width: 24px; height: 24px; }
.app.wide svg { margin-right: 1px; }
.app svg.linkedin, .app svg.cmd { width: 22px; height: 22px; }
.app svg.cogwheel { width: 19px; height: 19px; }
.app svg.explorer, .app svg.store { width: 23px; height: 23px; }
.app.open::after { content: ''; position: absolute; left: 4px; bottom: 0; width: 33px; height: 2px; background: #76b9ed; }
.badge { position: absolute; left: 22px; top: 18px; width: 19px; height: 18px; border: 1px solid #777; border-radius: 50%; background: rgba(35, 36, 40, .85); color: #fff; font: 600 11.500px/16px "Open Sans", sans-serif; letter-spacing: -.4px; text-align: center; }
.tray { position: relative; flex: 1; display: flex; align-items: center; white-space: nowrap; }
.tray > svg { fill: none; stroke: #fff; stroke-width: 1.100; }
.coins { width: 22px; height: 24px; margin-left: 20px; }
.tray > svg.coins { stroke: none; }
.currency { margin-left: 9px; font-size: 14px; }
.chevron { width: 13px; height: 9px; margin-left: 25px; }
.meet { width: 12px; height: 16px; margin-left: 12px; }
.battery { width: 17px; height: 13px; margin-left: 9px; }
.network { width: 17px; height: 16px; margin-left: 7px; }
.volume { width: 17px; height: 14px; margin-left: 7px; }
.clock { width: 54px; margin-left: 9px; display: flex; flex-direction: column; align-items: center; line-height: 18px; font-size: 12px; }
.action { position: relative; width: 16px; height: 16px; margin-left: 17px; }
.action svg { width: 16px; height: 16px; }
.action .badge { left: 7px; top: 6px; width: 17px; height: 17px; line-height: 15px; }
.peek { margin-left: auto; margin-right: 4px; width: 1px; height: 40px; background: #596069; }
</style>
